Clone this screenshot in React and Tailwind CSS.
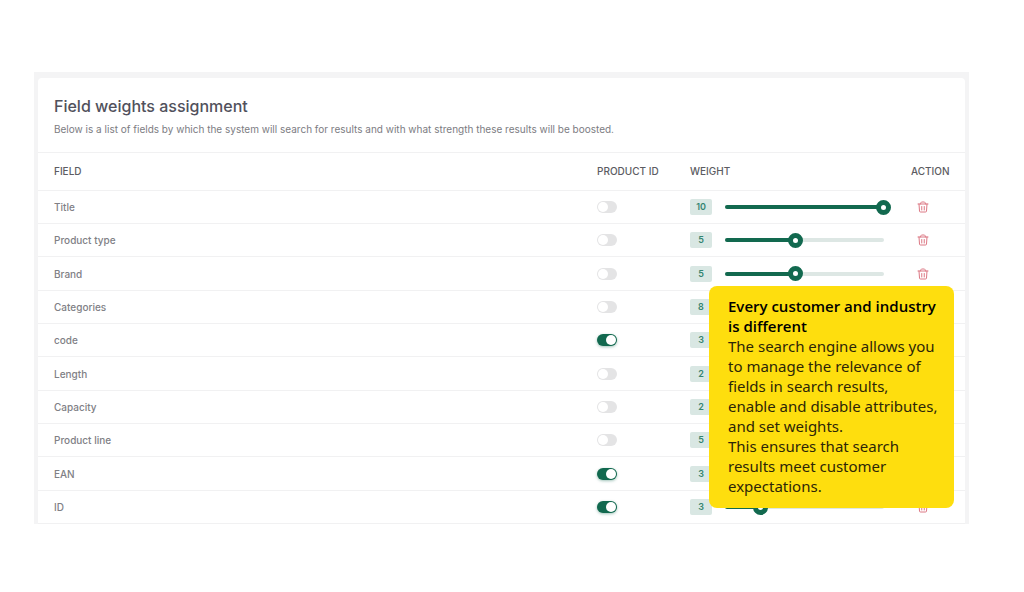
import React, { useState } from "react";

const initialFields = [
  { name: "Title", productId: false, weight: 10 },
  { name: "Product type", productId: false, weight: 5 },
  { name: "Brand", productId: false, weight: 5 },
  { name: "Categories", productId: false, weight: 8 },
  { name: "code", productId: true, weight: 3 },
  { name: "Length", productId: false, weight: 2 },
  { name: "Capacity", productId: false, weight: 2 },
  { name: "Product line", productId: false, weight: 5 },
  { name: "EAN", productId: true, weight: 3 },
  { name: "ID", productId: true, weight: 3 },
];

const MIN_WEIGHT = 1;
const MAX_WEIGHT = 10;

const TrashIcon = () => (
  <svg
    viewBox="0 0 24 24"
    className="w-3 h-3"
    fill="none"
    stroke="currentColor"
    strokeWidth="2"
    strokeLinecap="round"
    strokeLinejoin="round"
    aria-hidden="true"
  >
    <path d="M2 6h20" />
    <path d="M7 6l1-3a2 2 0 0 1 2-1h4a2 2 0 0 1 2 1l1 3" />
    <path d="M4 6l1 14a2 2 0 0 0 2 2h10a2 2 0 0 0 2-2l1-14" />
    <path d="M9.500 11v7M14.500 11v7" />
  </svg>
);

const Switch = ({ label, checked, onChange }) => (
  <input
    type="checkbox"
    role="switch"
    aria-label={label}
    checked={checked}
    onChange={onChange}
    className="appearance-none flex items-center w-5 h-3 px-px rounded-full cursor-pointer bg-[#e4e4e5] checked:bg-[#12694f] checked:justify-end checked:shadow-[0_1px_3px_#12694f66] before:block before:w-2.5 before:h-2.5 before:rounded-full before:bg-white"
  />
);

const WeightSlider = ({ label, value, onChange }) => {
  const percent = ((value - MIN_WEIGHT) / (MAX_WEIGHT - MIN_WEIGHT)) * 100;

  return (
    <div className="grid items-center flex-1">
      <div className="col-start-1 row-start-1 h-1 mx-[7px] rounded-xs bg-[#dde7e4]">
        <div
          className="h-full rounded-xs bg-[#12694f]"
          style={{ width: `${percent}%` }}
        />
      </div>
      <input
        type="range"
        aria-label={label}
        min={MIN_WEIGHT}
        max={MAX_WEIGHT}
        value={value}
        onChange={onChange}
        className="col-start-1 row-start-1 w-full h-4 appearance-none bg-transparent cursor-pointer [&::-webkit-slider-thumb]:appearance-none [&::-webkit-slider-thumb]:w-[15px] [&::-webkit-slider-thumb]:h-[15px] [&::-webkit-slider-thumb]:rounded-full [&::-webkit-slider-thumb]:border-5 [&::-webkit-slider-thumb]:border-[#12694f] [&::-webkit-slider-thumb]:bg-white"
      />
    </div>
  );
};

const Callout = () => (
  <aside className="absolute right-[15px] bottom-4 w-[245px] rounded-lg bg-[#fede0e] pl-[19px] pr-2 pt-2.5 pb-3 font-['Noto_Sans',sans-serif] text-[15px] leading-5 text-[#2d2608]">
    <h2 className="font-['Open_Sans','Noto_Sans',sans-serif] font-semibold text-black">
      Every customer and industry
      <br />
      is different
    </h2>
    <p>
      The search engine allows you
      <br />
      to manage the relevance of
      <br />
      fields in search results,
      <br />
      enable and disable attributes,
      <br />
      and set weights.
    </p>
    <p>
      This ensures that search
      <br />
      results meet customer
      <br />
      expectations.
    </p>
  </aside>
);

const App = () => {
  const [fields, setFields] = useState(initialFields);

  const updateField = (name, key, value) => {
    setFields((prev) =>
      prev.map((field) =>
        field.name === name ? { ...field, [key]: value } : field
      )
    );
  };

  const removeField = (name) => {
    setFields((prev) => prev.filter((field) => field.name !== name));
  };

  return (
    <main className="min-h-screen bg-white pt-[72px] pl-[34px] pr-[55px] font-['Inter',sans-serif]">
      <div className="relative bg-[#f4f4f5] px-1 pt-1.5">
        <section className="rounded-t-sm bg-white">
          <header className="px-4 pt-4 h-[74px]">
            <h1 className="text-base leading-6 font-medium text-[#51515c]">
              Field weights assignment
            </h1>
            <p className="mt-[3px] text-[10px] leading-4 text-[#7c7c82]">
              Below is a list of fields by which the system will search for
              results and with what strength these results will be boosted.
            </p>
          </header>

          <table className="w-full table-fixed border-collapse text-left">
            <colgroup>
              <col />
              <col className="w-[93px]" />
              <col className="w-[221px]" />
              <col className="w-[54px]" />
            </colgroup>
            <thead>
              <tr className="h-[38px] border-y border-[#f1f1f2] text-[10px] leading-4 text-[#5c5c62]">
                <th className="p-0 pb-0.5 pl-4 font-medium">FIELD</th>
                <th className="p-0 pb-0.5 font-medium">PRODUCT ID</th>
                <th className="p-0 pb-0.5 font-medium">WEIGHT</th>
                <th className="p-0 pb-0.5 font-medium">ACTION</th>
              </tr>
            </thead>
            <tbody>
              {fields.map((field) => (
                <tr
                  key={field.name}
                  className="h-[33px] nth-[3n]:h-[34px] border-b border-[#f1f1f2]"
                >
                  <td className="p-0 pl-4 text-[10px] leading-4 font-medium text-[#808085]">
                    {field.name}
                  </td>
                  <td className="p-0">
                    <Switch
                      label={`Product ID ${field.name}`}
                      checked={field.productId}
                      onChange={(event) =>
                        updateField(
                          field.name,
                          "productId",
                          event.target.checked
                        )
                      }
                    />
                  </td>
                  <td className="p-0">
                    <div className="flex items-center gap-1.5 pr-5">
                      <span className="w-[22px] h-4 rounded-xs bg-[#d9e7e3] text-center text-[9px] leading-4 font-semibold text-[#358571]">
                        {field.weight}
                      </span>
                      <WeightSlider
                        label={`Weight ${field.name}`}
                        value={field.weight}
                        onChange={(event) =>
                          updateField(
                            field.name,
                            "weight",
                            Number(event.target.value)
                          )
                        }
                      />
                    </div>
                  </td>
                  <td className="p-0 pl-1.5">
                    <button
                      type="button"
                      aria-label={`Delete ${field.name}`}
                      className="block cursor-pointer text-[#dc7884]"
                      onClick={() => removeField(field.name)}
                    >
                      <TrashIcon />
                    </button>
                  </td>
                </tr>
              ))}
            </tbody>
          </table>
        </section>

        <Callout />
      </div>
    </main>
  );
};

export default App;
